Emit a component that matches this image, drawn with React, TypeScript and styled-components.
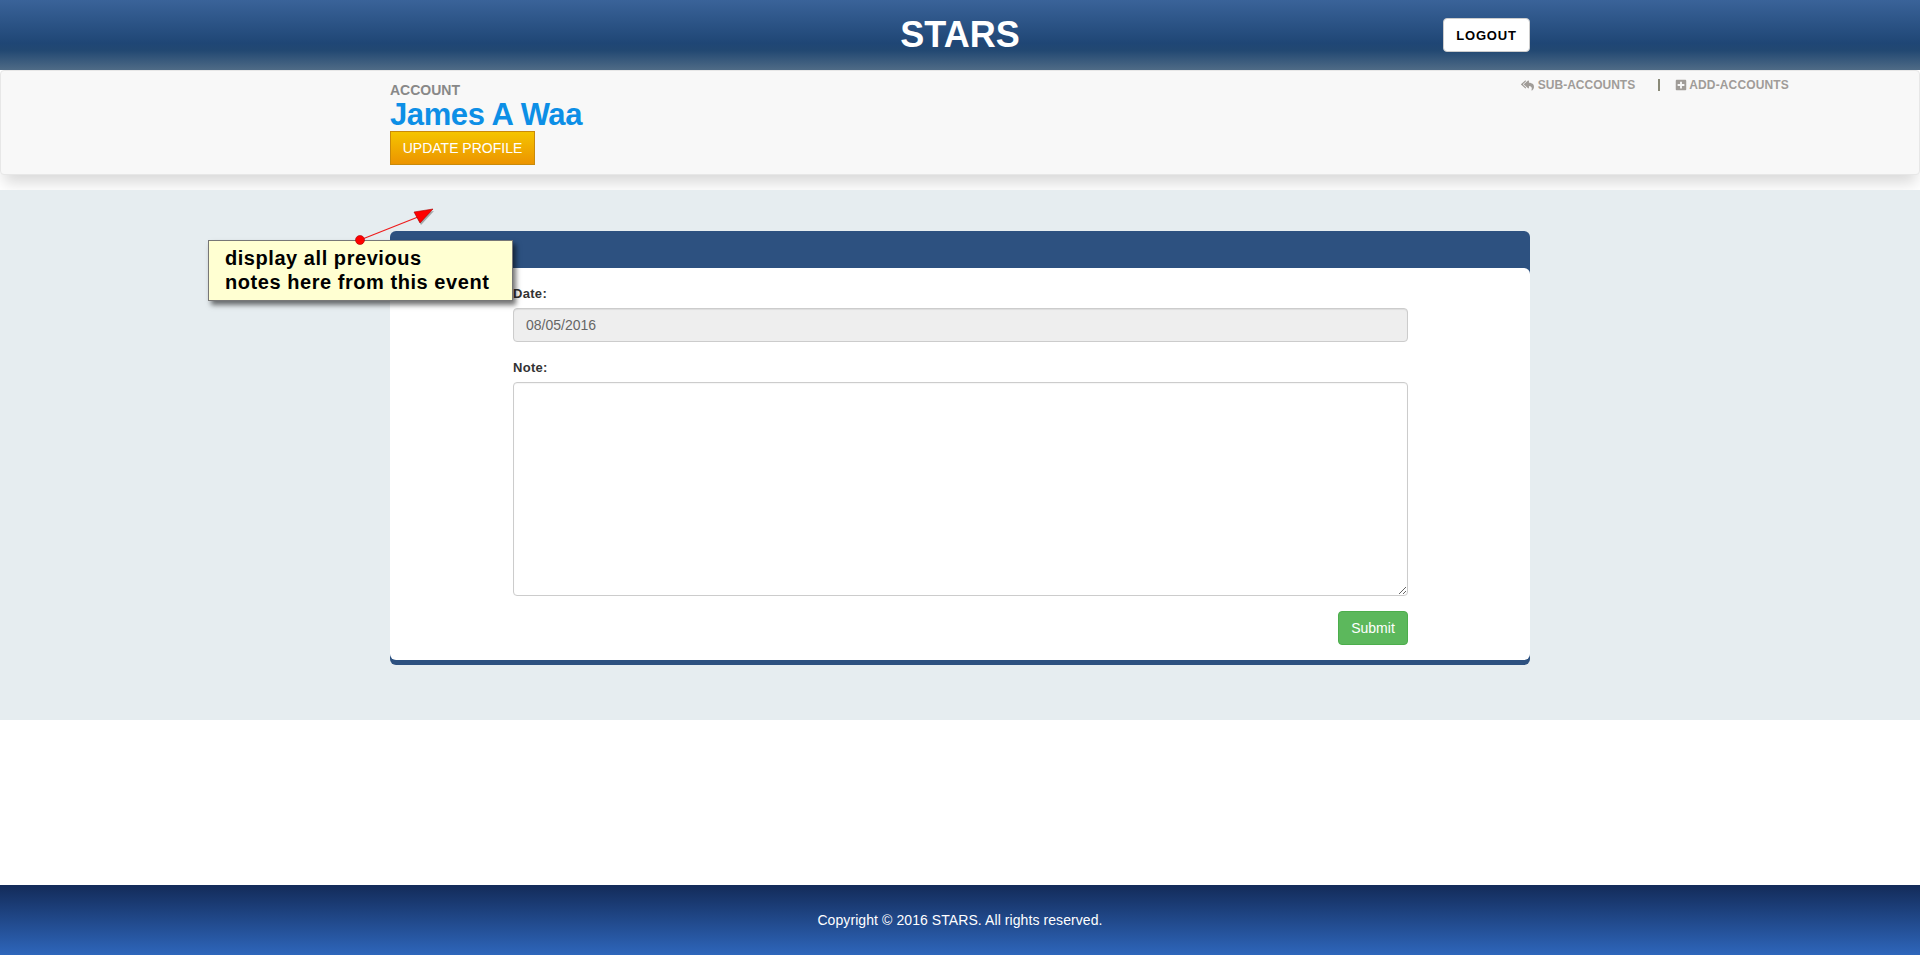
import React from "react";
import styled, { createGlobalStyle } from "styled-components";
import { FaPlusSquare, FaReplyAll } from "react-icons/fa";

const GlobalStyle = createGlobalStyle`
  * {
    box-sizing: border-box;
  }
  html,
  body {
    margin: 0;
    padding: 0;
    background: #fff;
    font-family: "Liberation Sans", Arial, sans-serif;
    font-size: 14px;
    color: #333;
  }
`;

const App: React.FC = () => {
  return (
    <Page>
      <GlobalStyle />
      <Header>
        <HeaderInner>
          <Brand>STARS</Brand>
          <LogoutButton>LOGOUT</LogoutButton>
        </HeaderInner>
      </Header>
      <AccountPanel>
        <AccountInfo>
          <AccountLabel>ACCOUNT</AccountLabel>
          <AccountName>James A Waa</AccountName>
          <UpdateButton>UPDATE PROFILE</UpdateButton>
        </AccountInfo>
        <AccountLinks>
          <AccountLink>
            <FaReplyAll size={13} />
            SUB-ACCOUNTS
          </AccountLink>
          <LinkDivider />
          <AccountLink $tight>
            <FaPlusSquare size={12} />
            ADD-ACCOUNTS
          </AccountLink>
        </AccountLinks>
      </AccountPanel>
      <Main>
        <Card>
          <CardBody>
            <Field>
              <FieldLabel>Date:</FieldLabel>
              <DateInput disabled value="08/05/2016" readOnly />
            </Field>
            <Field>
              <FieldLabel>Note:</FieldLabel>
              <NoteInput />
            </Field>
            <FormActions>
              <SubmitButton>Submit</SubmitButton>
            </FormActions>
          </CardBody>
        </Card>
        <Callout>
          <CalloutArrow width="90" height="50" viewBox="0 0 90 50">
            <line x1="6" y1="36" x2="64" y2="13" stroke="#ee1c1c" strokeWidth="1.2" />
            <polygon points="79,5 60,8 66,19" fill="#555" opacity="0.45" transform="translate(1 2)" />
            <polygon points="79,5 60,8 66,19" fill="#f00" stroke="#a00" strokeWidth="0.6" />
            <circle cx="6" cy="36" r="4.5" fill="#f00" stroke="#a00" strokeWidth="0.6" />
          </CalloutArrow>
          display all previous
          <br />
          notes here from this event
        </Callout>
      </Main>
      <Spacer />
      <Footer>Copyright © 2016 STARS. All rights reserved.</Footer>
    </Page>
  );
};

const Page = styled.div`
  display: flex;
  flex-direction: column;
  min-height: 955px;
`;

const Header = styled.header`
  height: 70px;
  background: linear-gradient(
    to bottom,
    #3a6399 0%,
    #1f4675 62%,
    #224872 72%,
    #4f6b86 100%
  );
`;

const HeaderInner = styled.div`
  position: relative;
  display: flex;
  justify-content: flex-end;
  align-items: flex-start;
  width: 1140px;
  height: 100%;
  margin: 0 auto;
  padding-top: 18px;
`;

const Brand = styled.h1`
  position: absolute;
  left: 0;
  right: 0;
  top: 15px;
  margin: 0;
  text-align: center;
  font-size: 36px;
  line-height: 40px;
  font-weight: 700;
  color: #fff;
`;

const LogoutButton = styled.button`
  width: 87px;
  height: 34px;
  padding: 0;
  background: #fff;
  border: 1px solid #ccc;
  border-radius: 4px;
  font-family: inherit;
  font-size: 13px;
  font-weight: 700;
  letter-spacing: 0.8px;
  color: #000;
`;

const AccountPanel = styled.section`
  position: relative;
  display: flex;
  justify-content: space-between;
  align-items: flex-start;
  height: 105px;
  padding: 7px 130px 0 389px;
  background: #f8f8f8;
  border: 1px solid #e7e7e7;
  border-radius: 4px;
  box-shadow: 0 12px 14px -4px rgba(0, 0, 0, 0.15);
`;

const AccountInfo = styled.div`
  display: flex;
  flex-direction: column;
  align-items: flex-start;
  padding-top: 4px;
`;

const AccountLabel = styled.div`
  font-size: 14px;
  line-height: 16px;
  font-weight: 700;
  color: #888;
`;

const AccountName = styled.div`
  padding-top: 1px;
  font-size: 31px;
  line-height: 32px;
  font-weight: 700;
  letter-spacing: -0.4px;
  color: #0d8fe6;
`;

const UpdateButton = styled.button`
  width: 145px;
  height: 34px;
  padding: 0;
  background: linear-gradient(to bottom, #f5c400, #ec9400);
  border: 1px solid #c98a0a;
  font-family: inherit;
  font-size: 14px;
  color: #fff;
`;

const AccountLinks = styled.div`
  display: flex;
  align-items: center;
  height: 14px;
`;

const AccountLink = styled.a<{ $tight?: boolean }>`
  display: flex;
  align-items: center;
  gap: ${(props) => (props.$tight ? "2px" : "4px")};
  font-size: 12px;
  font-weight: 700;
  letter-spacing: ${(props) => (props.$tight ? "0.15px" : "0")};
  color: #a09c98;
`;

const LinkDivider = styled.span`
  width: 2px;
  height: 12px;
  margin: 0 15px 0 23px;
  background: #8a8a78;
`;

const Main = styled.main`
  position: relative;
  margin-top: 15px;
  padding: 41px 0 55px;
  background: #e6edf0;
`;

const Card = styled.div`
  width: 1140px;
  margin: 0 auto;
  padding: 37px 0 5px;
  background: #2d5180;
  border-radius: 6px;
`;

const CardBody = styled.div`
  padding: 16px 122px 15px 123px;
  background: #fff;
  border-radius: 6px;
`;

const Field = styled.div`
  margin-bottom: 15px;
`;

const FieldLabel = styled.label`
  display: block;
  margin-bottom: 5px;
  font-size: 13px;
  line-height: 19px;
  font-weight: 700;
  letter-spacing: 0.3px;
`;

const DateInput = styled.input`
  display: block;
  width: 100%;
  height: 34px;
  margin-bottom: 16px;
  padding: 6px 12px;
  background: #eee;
  border: 1px solid #ccc;
  border-radius: 4px;
  font-family: inherit;
  font-size: 14px;
  color: #666;
  box-shadow: inset 0 1px 1px rgba(0, 0, 0, 0.075);
`;

const NoteInput = styled.textarea`
  display: block;
  width: 100%;
  height: 214px;
  padding: 6px 12px;
  background: #fff;
  border: 1px solid #ccc;
  border-radius: 4px;
  font-family: inherit;
  font-size: 14px;
  box-shadow: inset 0 1px 1px rgba(0, 0, 0, 0.04);
`;

const FormActions = styled.div`
  display: flex;
  justify-content: flex-end;
`;

const SubmitButton = styled.button`
  width: 70px;
  height: 34px;
  padding: 0;
  background: #5cb85c;
  border: 1px solid #4cae4c;
  border-radius: 4px;
  font-family: inherit;
  font-size: 14px;
  color: #fff;
`;

const Callout = styled.div`
  position: absolute;
  left: 208px;
  top: 50px;
  width: 305px;
  height: 61px;
  padding: 5px 0 0 16px;
  background: #ffffd2;
  border: 1px solid #777;
  box-shadow: 3px 4px 5px rgba(0, 0, 0, 0.55);
  font-size: 20px;
  line-height: 24px;
  font-weight: 700;
  letter-spacing: 0.55px;
  color: #000;
`;

const CalloutArrow = styled.svg`
  position: absolute;
  left: 145px;
  top: -37px;
`;

const Spacer = styled.div`
  flex: 1;
`;

const Footer = styled.footer`
  display: flex;
  justify-content: center;
  align-items: center;
  height: 70px;
  background: linear-gradient(to bottom, #132b59, #2e66bb);
  font-size: 14px;
  letter-spacing: 0.08px;
  color: #fff;
`;

export default App;
